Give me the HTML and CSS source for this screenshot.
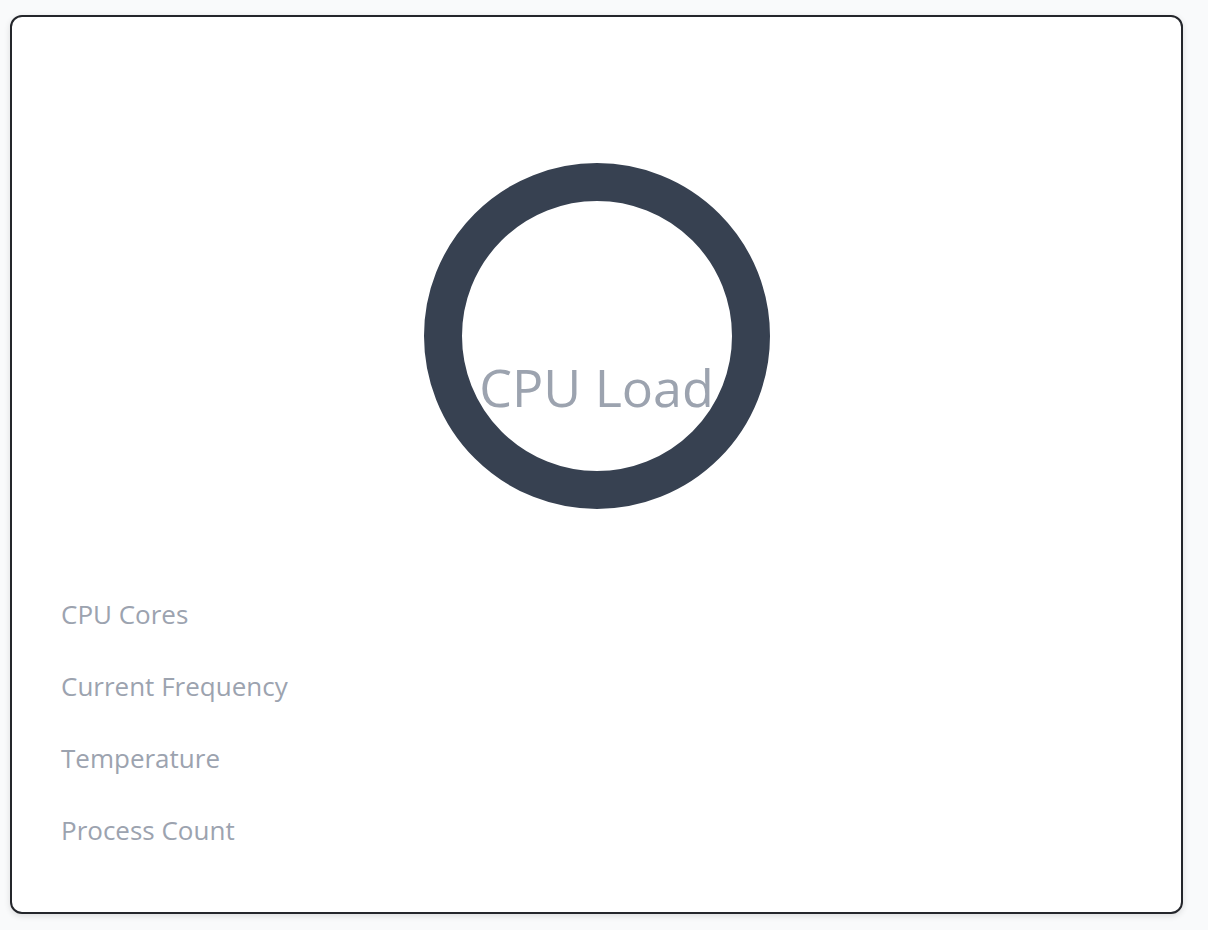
FILE: index.html
```html
<!DOCTYPE html>
<html lang="en">
<head>
<meta charset="utf-8">
<title>CPU</title>
<link rel="stylesheet" href="styles.css">
</head>
<body>
<div class="card">
  <div class="gauge">
    <svg class="ring" width="346" height="346" viewBox="0 0 346 346">
      <circle cx="173" cy="173" r="154" fill="none" stroke="#374151" stroke-width="38"/>
    </svg>
    <div class="gauge-label">CPU Load</div>
  </div>
  <ul class="stats">
    <li>CPU Cores</li>
    <li>Current Frequency</li>
    <li>Temperature</li>
    <li>Process Count</li>
  </ul>
</div>
</body>
</html>
```

FILE: styles.css
```css
html, body {
  margin: 0;
  padding: 0;
}
body {
  background: #f9fafb;
  font-family: "Open Sans", "Noto Sans", sans-serif;
  padding: 15px 25px 16px 10px;
}
.card {
  box-sizing: border-box;
  height: 899px;
  background: #fff;
  border: 2px solid #24262b;
  border-radius: 12px;
  box-shadow: 0 2px 6px rgba(0,0,0,0.12);
  padding: 0 48px;
  display: flex;
  flex-direction: column;
}
.gauge {
  position: relative;
  align-self: center;
  width: 346px;
  height: 346px;
  margin-top: 146px;
}
.ring {
  display: block;
}
.gauge-label {
  position: absolute;
  left: -40px;
  right: -40px;
  top: 194px;
  text-align: center;
  font-size: 52px;
  line-height: 60px;
  color: #9ca3af;
  white-space: nowrap;
}
.stats {
  list-style: none;
  margin: 69px 0 0 0;
  padding: 0 0 0 1px;
}
.stats li {
  font-size: 26px;
  line-height: 72px;
  color: #9ca3af;
}
```
